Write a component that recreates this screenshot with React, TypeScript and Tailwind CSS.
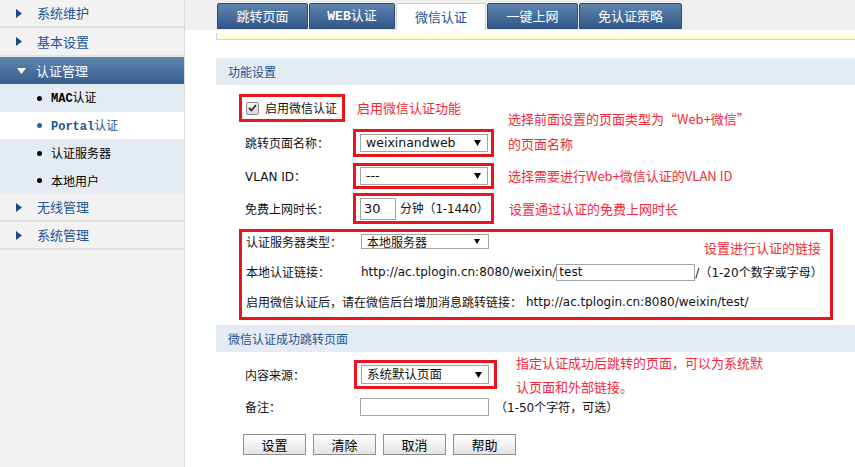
import React from 'react';

const FONT = "font-['DejaVu_Sans','Noto_Sans_CJK_SC',sans-serif]";
const CJK = "font-['Noto_Sans_CJK_SC',sans-serif]";

interface NavItem {
  label: React.ReactNode;
  kind: 'top' | 'open' | 'sub' | 'current';
  h: string;
}

const navItems: NavItem[] = [
  { label: '系统维护', kind: 'top', h: 'h-[28px]' },
  { label: '基本设置', kind: 'top', h: 'h-[29px]' },
  { label: '认证管理', kind: 'open', h: 'h-[27px]' },
  { label: <><span className="font-['Liberation_Mono',monospace] font-bold">MAC</span>认证</>, kind: 'sub', h: 'h-[28px]' },
  { label: <><span className="font-['Liberation_Mono',monospace] font-bold">Portal</span>认证</>, kind: 'current', h: 'h-[27px]' },
  { label: '认证服务器', kind: 'sub', h: 'h-[28px]' },
  { label: '本地用户', kind: 'sub', h: 'h-[27px]' },
  { label: '无线管理', kind: 'top', h: 'h-[28px]' },
  { label: '系统管理', kind: 'top', h: 'h-[28px]' },
];

const tabs = [
  { label: '跳转页面', w: 'w-[91px]', active: false },
  { label: <><span className="font-['Liberation_Mono',monospace] font-bold">WEB</span>认证</>, w: 'w-[86px]', active: false },
  { label: '微信认证', w: 'w-[90px]', active: true },
  { label: '一键上网', w: 'w-[91px]', active: false },
  { label: '免认证策略', w: 'w-[103px]', active: false },
];

const Arrow = () => (
  <svg width="6" height="9" viewBox="0 0 6 9" className="shrink-0">
    <polygon points="0,0 6,4.5 0,9" fill="#1b4a85" />
  </svg>
);

const FakeSelect = ({ value, h = 'h-[18px]' }: { value: string; h?: string }) => (
  <div className={`flex w-[128px] items-center justify-between border border-[#a5a5a5] bg-white pl-[5px] pr-[6px] ${h}`}>
    <span className="text-[12.5px] leading-none text-[#111]">{value}</span>
    <svg width="7" height="6" viewBox="0 0 7 6">
      <polygon points="0,0 7,0 3.5,6" fill="#000" />
    </svg>
  </div>
);

const SectionHeader = ({ title, mt }: { title: string; mt: string }) => (
  <div className={`${mt} flex h-[27px] items-center bg-[#e4ebf2] pl-[12px] text-[12px] text-[#1d5493] ${CJK}`}>
    {title}
  </div>
);

const Note = ({ children, extra = '' }: { children: React.ReactNode; extra?: string }) => (
  <div className={`whitespace-nowrap text-[13px] text-[#f5283a] ${CJK} ${extra}`}>{children}</div>
);

const App = () => {
  return (
    <div className={`flex h-[467px] w-[855px] overflow-hidden bg-white text-[12px] text-[#111] ${FONT}`}>
      {/* Sidebar */}
      <aside className={`flex w-[185px] shrink-0 flex-col border-r border-[#dadada] bg-[#f2f2f2] ${CJK}`}>
        {navItems.map((item, i) => {
          if (item.kind === 'top') {
            return (
              <div key={i} className={`${item.h} flex items-center gap-[15px] border-b-2 border-[#e2e2e2] bg-[#f2f2f3] pl-[16px] text-[13px] text-[#1d5493]`}>
                <Arrow />
                <span>{item.label}</span>
              </div>
            );
          }
          if (item.kind === 'open') {
            return (
              <div key={i} className={`${item.h} flex items-center gap-[10px] bg-gradient-to-b from-[#5f85b0] to-[#365d8c] pl-[17px] text-[13px] text-white`}>
                <svg width="9" height="6" viewBox="0 0 9 6">
                  <polygon points="0,0 9,0 4.5,6" fill="#fff" />
                </svg>
                <span>{item.label}</span>
              </div>
            );
          }
          const current = item.kind === 'current';
          return (
            <div key={i} className={`${item.h} flex items-center gap-[9px] pl-[37px] text-[12px] ${current ? 'bg-white text-[#1d5493]' : 'bg-[#e4ebf2] text-black'}`}>
              <span className={`h-[5px] w-[5px] rounded-full ${current ? 'bg-[#2a62a6]' : 'bg-black'}`} />
              <span>{item.label}</span>
            </div>
          );
        })}
      </aside>

      {/* Main */}
      <main className="flex flex-1 flex-col">
        <div className={`flex h-[30px] items-end gap-[1px] bg-[#efefef] pl-[32px] ${CJK}`}>
          {tabs.map((t, i) =>
            t.active ? (
              <div key={i} className={`${t.w} flex h-[27px] items-center justify-center rounded-t-[2px] border border-b-0 border-[#cfcfcf] bg-white text-[13px] text-[#1d5493]`}>
                <span>{t.label}</span>
              </div>
            ) : (
              <div key={i} className={`${t.w} mb-[1px] flex h-[26px] items-center justify-center rounded-t-[2px] border border-[#2c4c76] bg-gradient-to-b from-[#5f84ae] to-[#32588a] text-[13px] text-white`}>
                <span>{t.label}</span>
              </div>
            )
          )}
        </div>

        <div className="flex flex-col pl-[31px]">
          <div className="mt-[3px] h-[7px] border-b border-l border-[#cbd6e2] bg-[#ffffd2]" />

          <SectionHeader title="功能设置" mt="mt-[18px]" />

          {/* enable */}
          <div className="mt-[9px] flex items-center">
            <div className="ml-[23px] flex h-[28px] w-[106px] items-center gap-[6px] whitespace-nowrap border-[3px] border-[#e8141e] pl-[4px]">
              <span className="flex h-[13px] w-[13px] shrink-0 items-center justify-center rounded-[2px] border border-[#8c8c8c] bg-gradient-to-b from-[#f4f4f4] to-[#d8d8d8]">
                <svg width="9" height="8" viewBox="0 0 9 8">
                  <path d="M1 4 L3.5 6.5 L8 1" stroke="#333" strokeWidth="1.8" fill="none" />
                </svg>
              </span>
              <span className={`text-[12px] ${CJK}`}>启用微信认证</span>
            </div>
            <Note extra="ml-[12px]">启用微信认证功能</Note>
          </div>

          {/* page name */}
          <div className="mt-[7px] flex items-center">
            <div className={`ml-[29px] w-[108px] text-[12px] ${CJK}`}>跳转页面名称：</div>
            <div className="flex h-[28px] w-[141px] items-center border-[3px] border-[#e8141e] pl-[4px]">
              <FakeSelect value="weixinandweb" />
            </div>
            <Note extra="ml-[14px] -mt-[25px] leading-[25px]">
              <div>选择前面设置的页面类型为“Web+微信”</div>
              <div>的页面名称</div>
            </Note>
          </div>

          {/* vlan */}
          <div className="mt-[6px] flex items-center">
            <div className="ml-[29px] w-[108px] text-[12px]">
              VLAN ID<span className={CJK}>：</span>
            </div>
            <div className="flex h-[26px] w-[141px] items-center border-[3px] border-[#e8141e] pl-[4px]">
              <FakeSelect value="---" />
            </div>
            <Note extra="ml-[14px]">选择需要进行Web+微信认证的VLAN ID</Note>
          </div>

          {/* free time */}
          <div className="mt-[4px] flex items-center">
            <div className={`ml-[29px] w-[108px] text-[12px] ${CJK}`}>免费上网时长：</div>
            <div className="flex h-[31px] w-[141px] items-center gap-[4px] whitespace-nowrap border-[3px] border-[#e8141e] pl-[4px]">
              <input
                readOnly
                defaultValue="30"
                className="h-[22px] w-[36px] shrink-0 border border-[#a5a5a5] px-[3px] text-[13px] outline-none"
              />
              <span className="text-[12px] tracking-[-0.2px]">
                <span className={CJK}>分钟（</span>1-1440<span className={CJK}>）</span>
              </span>
            </div>
            <Note extra="ml-[15px]">设置通过认证的免费上网时长</Note>
          </div>

          {/* server box */}
          <div className="ml-[23px] mt-[5px] flex h-[91px] w-[594px] flex-col border-[3px] border-[#e8141e] pl-[4px]">
            <div className="flex h-[30px] items-start pt-[2px]">
              <div className={`w-[115px] leading-[15px] ${CJK}`}>认证服务器类型：</div>
              <div className="flex h-[15px] w-[128px] items-center justify-between border border-[#a5a5a5] pl-[5px] pr-[8px]">
                <span className={`text-[12px] leading-none ${CJK}`}>本地服务器</span>
                <svg width="6" height="5" viewBox="0 0 6 5">
                  <polygon points="0,0 6,0 3,5" fill="#000" />
                </svg>
              </div>
              <Note extra="ml-auto mr-[9px] mt-[6px] leading-[16px]">设置进行认证的链接</Note>
            </div>
            <div className="flex h-[20px] items-center whitespace-nowrap">
              <div className={`w-[115px] ${CJK}`}>本地认证链接：</div>
              <span>http://ac.tplogin.cn:8080/weixin/</span>
              <input
                readOnly
                defaultValue="test"
                className="h-[17px] w-[139px] border border-[#a5a5a5] px-[2px] text-[12px] outline-none"
              />
              <span>
                /<span className={CJK}>（</span>1-20<span className={CJK}>个数字或字母）</span>
              </span>
            </div>
            <div className="mt-[10px] flex h-[20px] items-center whitespace-nowrap">
              <span className={CJK}>启用微信认证后，请在微信后台增加消息跳转链接：</span>
              <span className="ml-[4px]">http://ac.tplogin.cn:8080/weixin/test/</span>
            </div>
          </div>

          <SectionHeader title="微信认证成功跳转页面" mt="mt-[5px]" />

          {/* source */}
          <div className="mt-[8px] flex h-[29px] items-center">
            <div className={`ml-[29px] w-[109px] ${CJK}`}>内容来源：</div>
            <div className="flex h-[29px] w-[143px] items-center border-[3px] border-[#e8141e] pl-[4px]">
              <div className="flex h-[19px] w-[128px] items-center justify-between border border-[#a5a5a5] bg-white pl-[5px] pr-[6px]">
                <span className={`text-[12.5px] leading-none ${CJK}`}>系统默认页面</span>
                <svg width="7" height="6" viewBox="0 0 7 6">
                  <polygon points="0,0 7,0 3.5,6" fill="#000" />
                </svg>
              </div>
            </div>
            <Note extra="ml-[19px] -my-[10px] leading-[24px]">
              <div>指定认证成功后跳转的页面，可以为系统默</div>
              <div>认页面和外部链接。</div>
            </Note>
          </div>

          {/* remark */}
          <div className="mt-[9px] flex h-[18px] items-center">
            <div className={`ml-[29px] w-[115px] ${CJK}`}>备注：</div>
            <input readOnly className="h-[18px] w-[129px] border border-[#a5a5a5] outline-none" />
            <span className="ml-[6px]">
              <span className={CJK}>（</span>1-50<span className={CJK}>个字符，可选）</span>
            </span>
          </div>

          {/* buttons */}
          <div className={`ml-[27px] mt-[18px] flex gap-[7px] ${CJK}`}>
            {['设置', '清除', '取消', '帮助'].map((b) => (
              <button
                key={b}
                className="h-[21px] w-[63px] border border-[#8f8f8f] bg-gradient-to-b from-white to-[#e3e3e3] text-[13px] leading-none text-black"
              >
                {b}
              </button>
            ))}
          </div>
        </div>
      </main>
    </div>
  );
};

export default App;
